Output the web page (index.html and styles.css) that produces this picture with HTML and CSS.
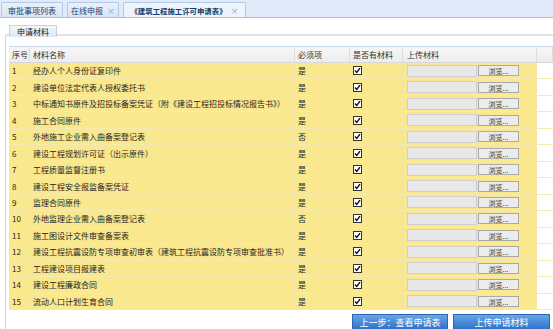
FILE: index.html
```html
<!DOCTYPE html>
<html lang="zh-CN">
<head>
  <meta charset="UTF-8" />
  <title>建筑工程施工许可申请表</title>
  <link rel="stylesheet" href="styles.css">
</head>
<body>
  <div class="tabbar">
    <div class="tab t1">审批事项列表</div>
    <div class="tab t2">在线申报 <span class="close">×</span></div>
    <div class="tab t3 active">《建筑工程施工许可申请表》 <span class="close">×</span></div>
  </div>

  <div class="panel">
    <div class="panel-tabs">
      <div class="panel-tab">申请材料</div>
    </div>
    <div class="panel-body">
      <div class="grid">
        <div class="row head">
          <div class="c no">序号</div>
          <div class="c name">材料名称</div>
          <div class="c req">必须项</div>
          <div class="c has">是否有材料</div>
          <div class="c up">上传材料</div>
          <div class="c extra"></div>
        </div>
        <div id="rows"></div>
      </div>
      <div class="actions">
        <button class="btn b1">上一步：查看申请表</button>
        <button class="btn b2">上传申请材料</button>
      </div>
    </div>
  </div>

  <script>
    var items = [
      ['经办人个人身份证复印件', '是'],
      ['建设单位法定代表人授权委托书', '是'],
      ['中标通知书原件及招投标备案凭证（附《建设工程招投标情况报告书》）', '是'],
      ['施工合同原件', '是'],
      ['外地施工企业需入曲备案登记表', '否'],
      ['建设工程规划许可证（出示原件）', '是'],
      ['工程质量监督注册书', '是'],
      ['建设工程安全报监备案凭证', '是'],
      ['监理合同原件', '是'],
      ['外地监理企业需入曲备案登记表', '否'],
      ['施工图设计文件审查备案表', '是'],
      ['建设工程抗震设防专项审查初审表（建筑工程抗震设防专项审查批准书）', '是'],
      ['工程建设项目报建表', '是'],
      ['建设工程廉政合同', '是'],
      ['流动人口计划生育合同', '是']
    ];
    var check = '<svg width="9" height="9" viewBox="0 0 9 9"><rect x="0.5" y="0.5" width="8" height="8" fill="#fff" stroke="#333"/><path d="M2 4.5 L3.8 6.5 L7 2.2" fill="none" stroke="#111" stroke-width="1.4"/></svg>';
    var html = '';
    items.forEach(function (it, i) {
      html += '<div class="row">' +
        '<div class="c no">' + (i + 1) + '</div>' +
        '<div class="c name">' + it[0] + '</div>' +
        '<div class="c req">' + it[1] + '</div>' +
        '<div class="c has">' + check + '</div>' +
        '<div class="c up"><span class="file"></span><span class="browse">浏览...</span></div>' +
        '<div class="c extra"></div>' +
        '</div>';
    });
    document.getElementById('rows').innerHTML = html;
  </script>
</body>
</html>
```

FILE: styles.css
```css
body {
  margin: 0;
  background: #fff;
  font-family: "Noto Sans CJK SC", "DejaVu Sans", sans-serif;
  font-size: 8px;
  color: #1e1e1e;
  width: 553px;
  height: 329px;
  overflow: hidden;
}
.tabbar {
  display: flex;
  gap: 4px;
  height: 15px;
  padding: 2px 0 0 1px;
  background: #e0eaf8;
  border-bottom: 1px solid #a8c3e8;
}
.tab {
  display: flex;
  align-items: center;
  justify-content: center;
  box-sizing: border-box;
  border: 1px solid #b3c8e6;
  border-bottom: none;
  border-radius: 2px 2px 0 0;
  background: linear-gradient(#eaf1fb, #d8e4f4);
  color: #25426b;
  white-space: nowrap;
}
.t1 { width: 62px; }
.t2 { width: 52px; }
.t3 { width: 123px; }
.tab.active {
  background: #eef4fc;
  font-weight: bold;
  font-size: 7.4px;
  color: #15396b;
}
.close {
  color: #8aa0c0;
  font-weight: normal;
  font-size: 8px;
  margin-left: 4px;
}
.panel {
  padding: 7px 0 0 5px;
}
.panel-tabs {
  display: flex;
  padding-left: 4px;
  border-bottom: 2px solid #e2e2e2;
  height: 9px;
}
.panel-tab {
  height: 11px;
  line-height: 11px;
  padding: 0 7px;
  border: 1px solid #c4d2e4;
  border-bottom: none;
  background: linear-gradient(#f4f7fb, #dde6f2);
  color: #222;
}
.panel-body {
  border-left: 1px solid #d6d6d6;
  padding: 10px 0 0 3px;
}
.grid {
  width: 544px;
}
.row {
  display: flex;
  height: 16.47px;
  box-sizing: border-box;
  border-bottom: 1px solid #f6eab0;
  background: #fae88f;
}
.row.head {
  height: 17px;
  background: linear-gradient(#f7f7f7, #ececec);
  border-top: 1px solid #c9d7ea;
  border-bottom: 1px solid #d8d8d8;
  color: #333;
}
.c {
  display: flex;
  align-items: center;
  padding: 0 3px;
  box-sizing: border-box;
  border-right: 1px solid #f2e4a4;
  white-space: nowrap;
  overflow: hidden;
}
.head .c {
  border-right: 1px solid #dedede;
}
.no { width: 21px; }
.name { width: 265px; }
.req { width: 55px; }
.has { width: 53px; }
.up { width: 134px; padding-left: 4px; }
.extra {
  width: 16px;
  border-right: none;
}
.row:not(.head) .extra {
  background: #fff;
}
.file {
  width: 68px;
  height: 10px;
  background: #e8e8e8;
  border: 1px solid #cfcfcf;
}
.browse {
  width: 41px;
  height: 11px;
  margin-left: 1px;
  line-height: 11px;
  box-sizing: border-box;
  text-align: center;
  background: #ececec;
  border: 1px solid #a9a9a9;
  font-size: 7px;
  color: #333;
}
.actions {
  display: flex;
  justify-content: flex-end;
  gap: 5px;
  padding: 4px 3px 0 0;
}
.btn {
  height: 16px;
  padding: 0;
  border: 1px solid #2c64ad;
  background: linear-gradient(#68a6e8, #2f72c8);
  color: #fff;
  font-family: "Noto Sans CJK SC", sans-serif;
  font-size: 9px;
}
.b1 { width: 96px; }
.b2 { width: 97px; }
```
